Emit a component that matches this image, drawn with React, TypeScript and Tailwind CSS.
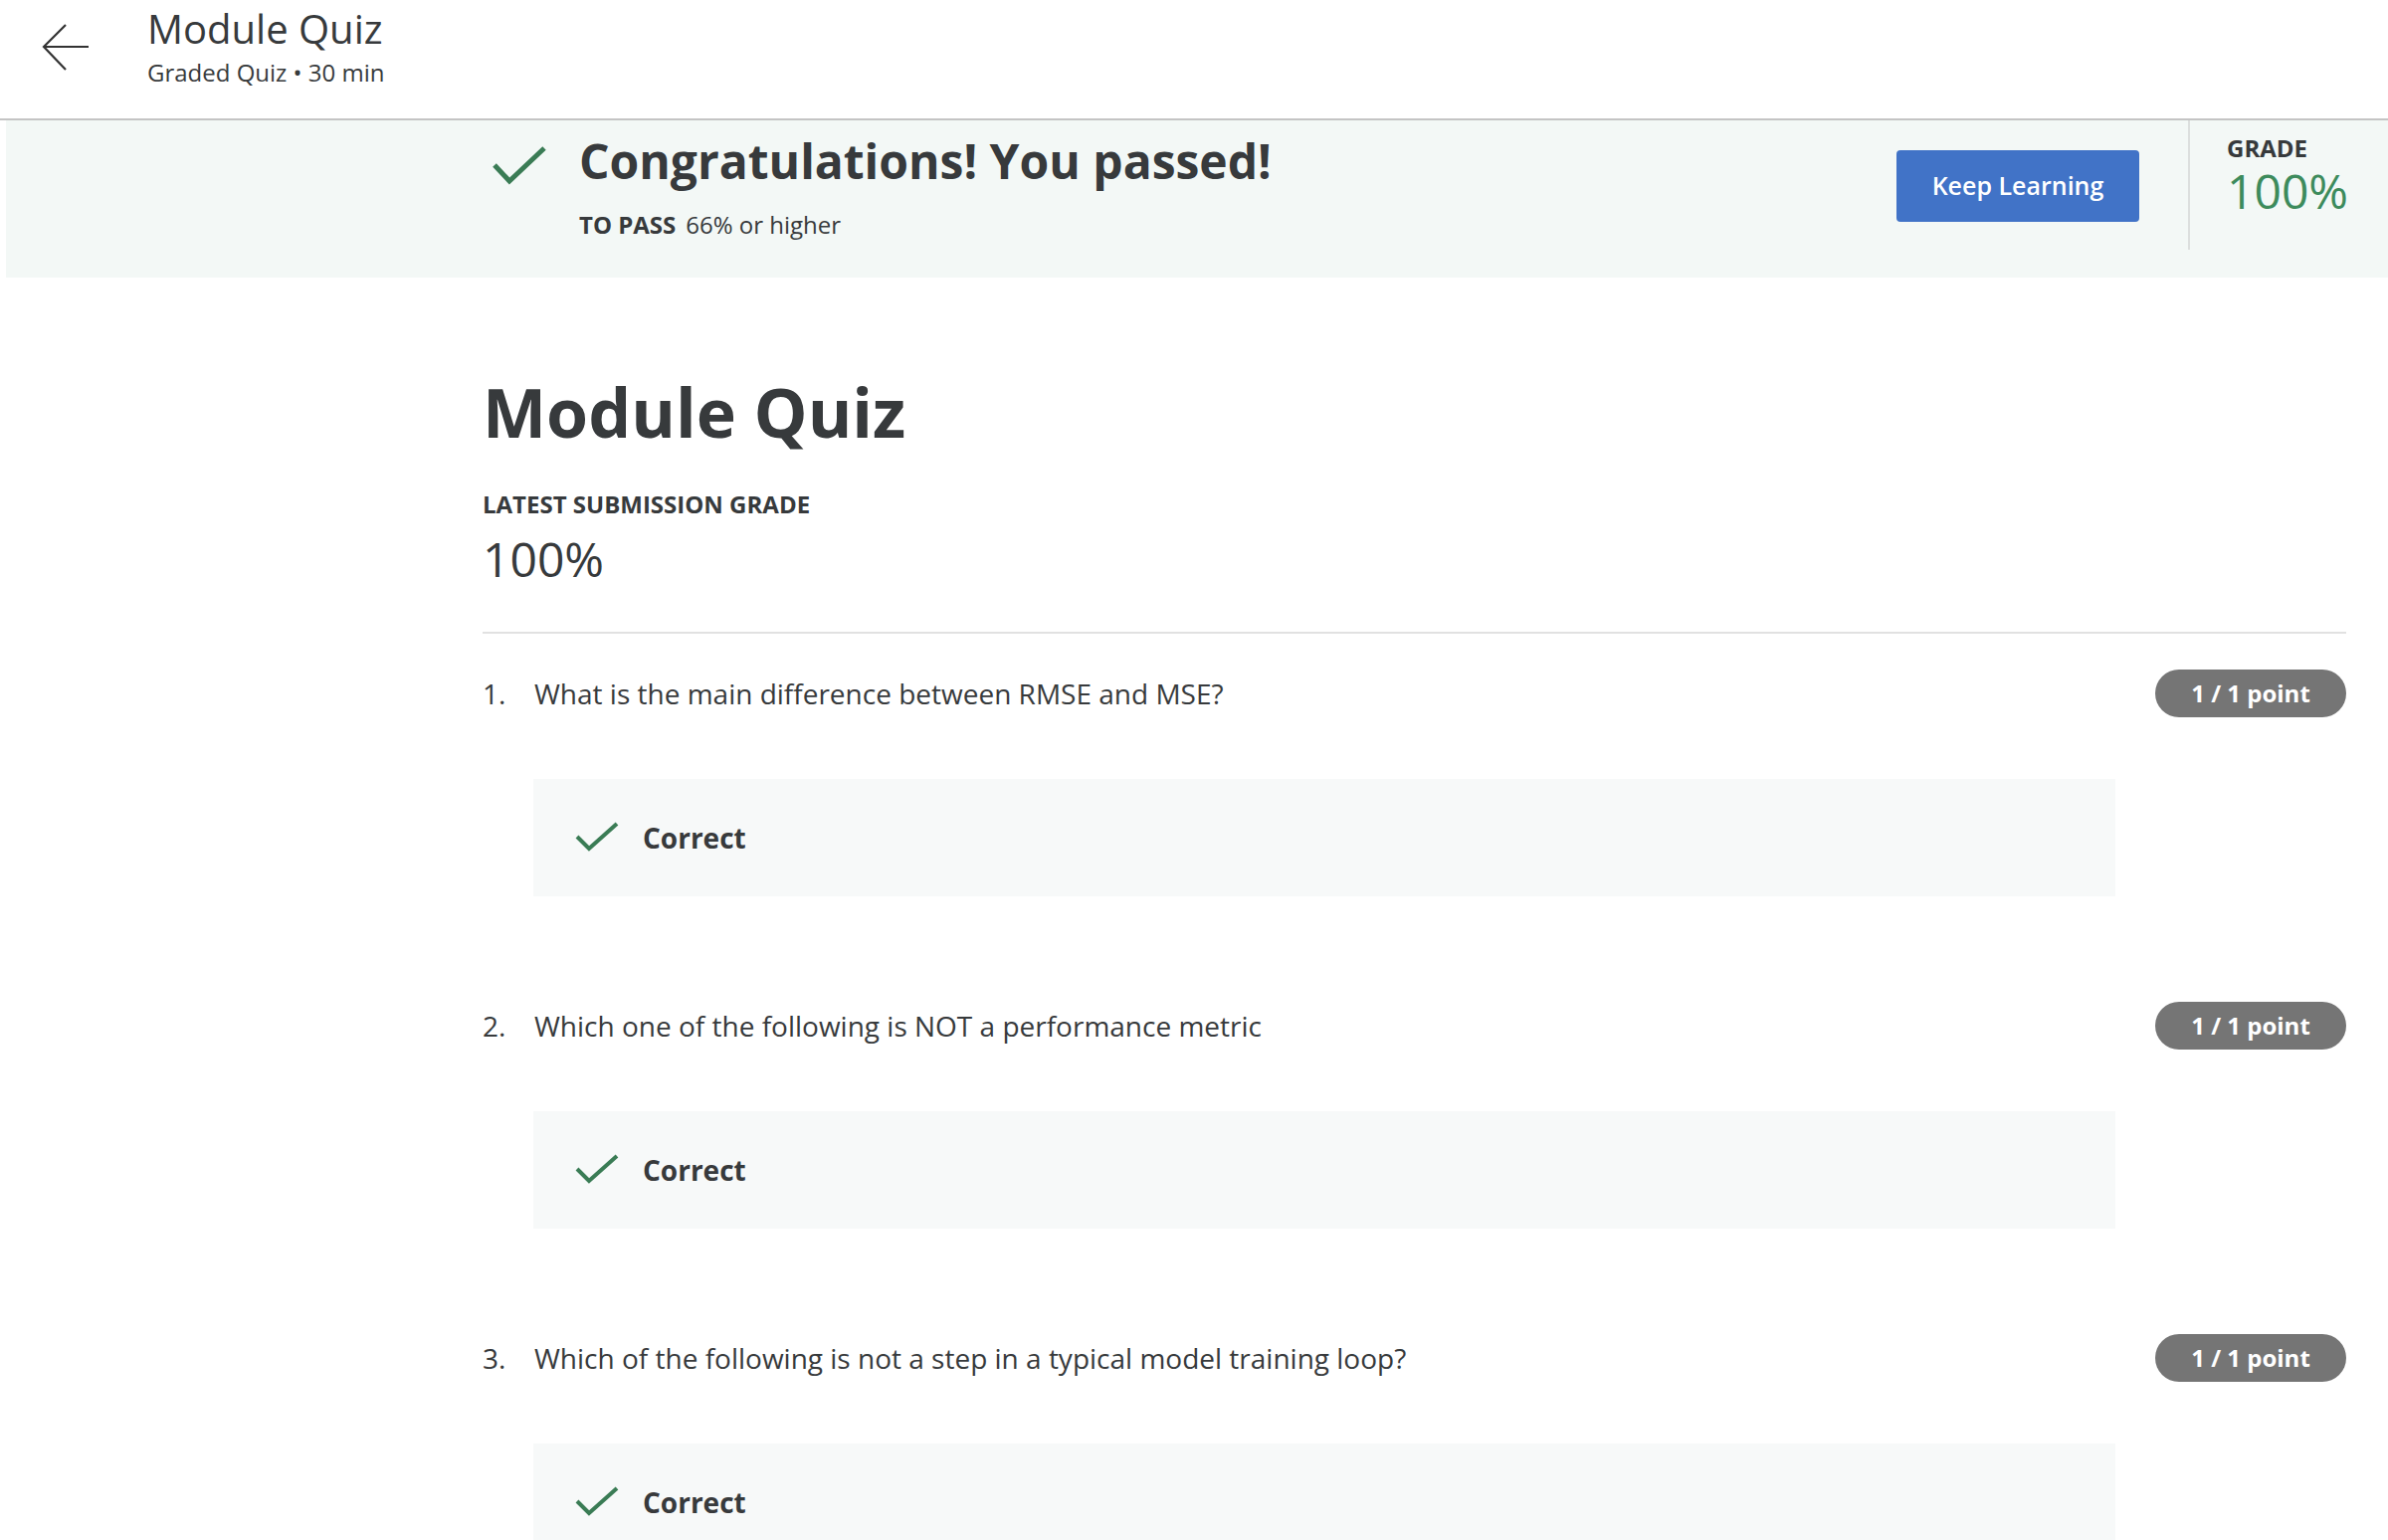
const questions = [
  { n: 1, q: 'What is the main difference between RMSE and MSE?' },
  { n: 2, q: 'Which one of the following is NOT a performance metric' },
  { n: 3, q: 'Which of the following is not a step in a typical model training loop?' },
];

function Check({ w, h, stroke, d }: { w: number; h: number; stroke: number; d: string }) {
  return (
    <svg width={w} height={h} viewBox={`0 0 ${w} ${h}`} fill="none" className="shrink-0">
      <path d={d} stroke="#3a7c55" strokeWidth={stroke} />
    </svg>
  );
}

export default function App() {
  return (
    <div className="min-h-screen bg-white text-[#373a3c] font-['Open_Sans',sans-serif]">
      {/* Header */}
      <header className="h-[121px] border-b-2 border-[#c4c4c4] flex items-start">
        <svg width="50" height="50" viewBox="0 0 50 50" fill="none" className="ml-[41px] mt-[22px] shrink-0">
          <path d="M48 25 H3 M25 3 L3 25 L25 48" stroke="#333" strokeWidth="2.2" />
        </svg>
        <div className="ml-[57px] pt-[9px]">
          <div className="text-[40px] leading-none">Module Quiz</div>
          <div className="text-[24px] leading-none mt-[12px]">Graded Quiz • 30 min</div>
        </div>
      </header>

      {/* Result banner */}
      <section className="ml-[6px] h-[158px] bg-[#f3f8f6] flex items-start">
        <div className="flex items-start pl-[488px] flex-1">
          <div className="mt-[25px]">
            <Check w={56} h={42} stroke={5} d="M3 20 L18 36 L53 3" />
          </div>
          <div className="ml-[32px] pt-[17px]">
            <h2 className="text-[48px] leading-none font-bold">Congratulations! You passed!</h2>
            <p className="text-[24px] leading-none mt-[28px]">
              <span className="font-bold">TO PASS</span>
              <span className="ml-[10px]">66% or higher</span>
            </p>
          </div>
        </div>
        <button className="mt-[30px] w-[244px] h-[72px] rounded-[4px] bg-[#4173c7] text-white text-[25px] font-semibold">
          Keep Learning
        </button>
        <div className="ml-[49px] w-[2px] h-[130px] bg-[#dcdfde]" />
        <div className="ml-[37px] w-[162px] pt-[12px]">
          <div className="text-[24px] leading-[1.36] font-bold">GRADE</div>
          <div className="text-[48px] leading-none mt-[2px] text-[#3d8b5c]">100%</div>
        </div>
      </section>

      {/* Main */}
      <main className="pl-[485px] pr-[42px]">
        <h1 className="mt-[101px] text-[68px] leading-none font-bold">Module Quiz</h1>
        <div className="mt-[47px] text-[24px] leading-none font-bold">LATEST SUBMISSION GRADE</div>
        <div className="mt-[19px] text-[48px] leading-none">100%</div>
        <div className="mt-[49px] h-[2px] bg-[#e1e1e1]" />

        <div className="pt-[36px]">
          {questions.map((item) => (
            <div key={item.n} className="pb-[106px]">
              <div className="flex items-center h-[48px]">
                <span className="w-[52px] text-[28px] leading-none">{item.n}.</span>
                <span className="flex-1 text-[28px] leading-none">{item.q}</span>
                <span className="h-[48px] w-[192px] rounded-full bg-[#757575] text-white text-[24px] font-bold flex items-center justify-center">
                  1 / 1 point
                </span>
              </div>
              <div className="mt-[62px] ml-[51px] w-[1590px] h-[118px] bg-[#f7f9f9] flex items-center pl-[42px]">
                <Check w={44} h={32} stroke={4} d="M2 15 L14 27 L42 2" />
                <span className="ml-[24px] text-[28px] font-bold leading-none">Correct</span>
              </div>
            </div>
          ))}
        </div>
      </main>
    </div>
  );
}
